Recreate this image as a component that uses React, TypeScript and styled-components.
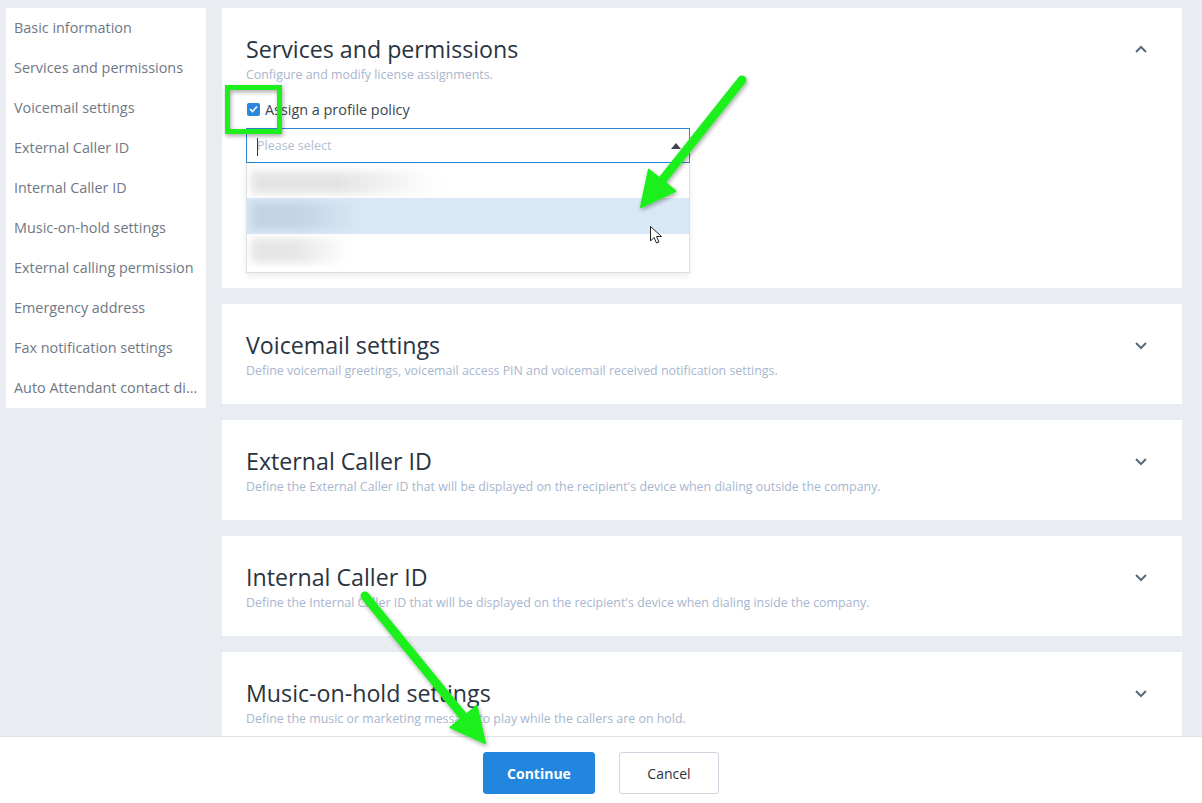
import styled, { createGlobalStyle } from "styled-components";

const GlobalStyle = createGlobalStyle`
  html, body {
    margin: 0;
    padding: 0;
    background: #e9edf1;
    font-family: "Open Sans", Lato, sans-serif;
  }
  * { box-sizing: border-box; }
`;

const Page = styled.div`
  position: relative;
  height: 803px;
  width: 1202px;
  overflow: hidden;
  display: grid;
  grid-template-rows: 1fr auto;
`;

const Top = styled.div`
  display: flex;
  align-items: flex-start;
  gap: 16px;
  padding: 8px 20px 0 6px;
  overflow: hidden;
`;

const Sidebar = styled.nav`
  width: 200px;
  background: #fff;
  display: flex;
  flex-direction: column;
`;

const NavItem = styled.div`
  height: 40px;
  line-height: 39px;
  padding: 0 8px;
  font-size: 14.4px;
  color: #6f7886;
  white-space: nowrap;
  overflow: hidden;
  text-overflow: ellipsis;
`;

const Main = styled.div`
  width: 960px;
  display: flex;
  flex-direction: column;
  gap: 16px;
`;

const Card = styled.section`
  position: relative;
  background: #fff;
  padding: 27px 24px 23px;
`;

const Title = styled.h2`
  margin: 0;
  font-size: 23.2px;
  line-height: 28px;
  font-weight: 400;
  color: #2a3441;
`;

const Subtitle = styled.p`
  margin: 2px 0 0;
  font-size: 12.4px;
  line-height: 20px;
  color: #a7b6ce;
`;

const Chevron = styled.svg`
  position: absolute;
  right: 34px;
  top: 36px;
`;

const CheckRow = styled.label`
  display: flex;
  align-items: center;
  gap: 5px;
  height: 20px;
  margin-top: 14px;
  font-size: 14.4px;
  color: #3b4451;
`;

const Box = styled.span`
  width: 13px;
  height: 13px;
  border-radius: 2px;
  background: #2a87dc;
  display: flex;
  align-items: center;
  justify-content: center;
  margin-left: 1px;
`;

const SelectField = styled.div`
  margin-top: 9px;
  width: 444px;
  height: 35px;
  border: 1px solid #2c86d6;
  display: flex;
  align-items: center;
  padding: 0 8px 0 10px;
  font-size: 12.5px;
  color: #b0bed3;
`;

const Caret = styled.span`
  width: 1px;
  height: 18px;
  background: #333;
  margin-right: -1px;
  margin-top: 2px;
`;

const Triangle = styled.span`
  margin-left: auto;
  width: 0;
  height: 0;
  border-left: 5px solid transparent;
  border-right: 5px solid transparent;
  border-bottom: 6px solid #3b4552;
`;

const Menu = styled.div`
  width: 444px;
  height: 110px;
  border: 1px solid #dcdfe3;
  border-top: none;
  box-shadow: 0 3px 6px rgba(0, 0, 0, 0.08);
  padding: 4px 0;
  margin-bottom: -8px;
`;

const Option = styled.div<{ $active?: boolean; $h: number }>`
  height: ${(p) => p.$h}px;
  background: ${(p) => (p.$active ? "#d9e8f6" : "#fff")};
  position: relative;
  overflow: hidden;
`;

const Blur = styled.div<{ $w: number; $c: string }>`
  position: absolute;
  left: 4px;
  top: 4px;
  bottom: 4px;
  width: ${(p) => p.$w}px;
  background: linear-gradient(90deg, ${(p) => p.$c} 0%, ${(p) => p.$c} 45%, rgba(255,255,255,0) 100%);
  filter: blur(4px);
`;

const Footer = styled.footer`
  height: 67px;
  background: #fff;
  border-top: 1px solid #dfe4ea;
  display: flex;
  justify-content: center;
  align-items: flex-start;
  padding-top: 15px;
  gap: 24px;
`;

const Button = styled.button<{ $primary?: boolean }>`
  height: 42px;
  width: ${(p) => (p.$primary ? 112 : 100)}px;
  border-radius: 3px;
  font-family: inherit;
  font-size: 14px;
  font-weight: ${(p) => (p.$primary ? 700 : 400)};
  background: ${(p) => (p.$primary ? "#2286df" : "#fff")};
  color: ${(p) => (p.$primary ? "#fff" : "#2b333d")};
  border: 1px solid ${(p) => (p.$primary ? "#2286df" : "#cfd6df")};
`;

const Overlay = styled.svg`
  position: absolute;
  left: 0;
  top: 0;
  pointer-events: none;
`;

const navItems = [
  "Basic information",
  "Services and permissions",
  "Voicemail settings",
  "External Caller ID",
  "Internal Caller ID",
  "Music-on-hold settings",
  "External calling permission",
  "Emergency address",
  "Fax notification settings",
  "Auto Attendant contact directory",
];

const sections = [
  {
    title: "Voicemail settings",
    sub: "Define voicemail greetings, voicemail access PIN and voicemail received notification settings.",
  },
  {
    title: "External Caller ID",
    sub: "Define the External Caller ID that will be displayed on the recipient's device when dialing outside the company.",
  },
  {
    title: "Internal Caller ID",
    sub: "Define the Internal Caller ID that will be displayed on the recipient's device when dialing inside the company.",
  },
  {
    title: "Music-on-hold settings",
    sub: "Define the music or marketing message to play while the callers are on hold.",
  },
];

function ChevronIcon({ up }: { up?: boolean }) {
  return (
    <Chevron width="14" height="10" viewBox="0 0 14 10">
      <polyline
        points={up ? "2,8 7,3 12,8" : "2,3 7,8 12,3"}
        fill="none"
        stroke="#5a6a7d"
        strokeWidth="2"
      />
    </Chevron>
  );
}

function Arrow({ x1, y1, x2, y2 }: { x1: number; y1: number; x2: number; y2: number }) {
  const dx = x2 - x1;
  const dy = y2 - y1;
  const len = Math.hypot(dx, dy);
  const ux = dx / len;
  const uy = dy / len;
  const head = 34;
  const half = 17;
  const bx = x2 - ux * head;
  const by = y2 - uy * head;
  const px = -uy;
  const py = ux;
  const pts = `${x2},${y2} ${bx + px * half},${by + py * half} ${bx - px * half},${by - py * half}`;
  return (
    <g filter="url(#shadow)">
      <line x1={x1} y1={y1} x2={bx + ux * 4} y2={by + uy * 4} stroke="#1ef01e" strokeWidth="9" strokeLinecap="round" />
      <polygon points={pts} fill="#1ef01e" stroke="#1ef01e" strokeWidth="2" strokeLinejoin="round" />
    </g>
  );
}

export default function App() {
  return (
    <>
      <GlobalStyle />
      <Page>
        <Top>
          <Sidebar>
            {navItems.map((n) => (
              <NavItem key={n}>{n}</NavItem>
            ))}
          </Sidebar>
          <Main>
            <Card>
              <Title>Services and permissions</Title>
              <Subtitle>Configure and modify license assignments.</Subtitle>
              <ChevronIcon up />
              <CheckRow>
                <Box>
                  <svg width="9" height="8" viewBox="0 0 9 8">
                    <polyline points="1,4 3.5,6.5 8,1.5" fill="none" stroke="#fff" strokeWidth="1.6" />
                  </svg>
                </Box>
                Assign a profile policy
              </CheckRow>
              <SelectField>
                <Caret />
                Please select
                <Triangle />
              </SelectField>
              <Menu>
                <Option $h={31}>
                  <Blur $w={190} $c="#e4e4e4" />
                </Option>
                <Option $h={36} $active>
                  <Blur $w={110} $c="#c3d3e4" />
                </Option>
                <Option $h={33}>
                  <Blur $w={100} $c="#e6e6e6" />
                </Option>
              </Menu>
            </Card>
            {sections.map((s) => (
              <Card key={s.title}>
                <Title>{s.title}</Title>
                <Subtitle>{s.sub}</Subtitle>
                <ChevronIcon />
              </Card>
            ))}
          </Main>
        </Top>
        <Footer>
          <Button $primary>Continue</Button>
          <Button>Cancel</Button>
        </Footer>
        <Overlay width="1202" height="803" viewBox="0 0 1202 803">
          <defs>
            <filter id="shadow" x="-20%" y="-20%" width="140%" height="140%">
              <feDropShadow dx="1" dy="2" stdDeviation="2" floodColor="#000" floodOpacity="0.35" />
            </filter>
          </defs>
          <rect x="227.5" y="87.5" width="52" height="44" fill="none" stroke="#1ef01e" strokeWidth="5" filter="url(#shadow)" />
          <Arrow x1={742} y1={80} x2={641} y2={207} />
          <Arrow x1={365} y1={596} x2={485} y2={743} />
          <g transform="translate(650,226)">
            <path d="M0.5,0.5 L0.5,15 L4,11.5 L6.5,17 L9,16 L6.5,10.5 L11.5,10.5 Z" fill="#fff" stroke="#222" strokeWidth="1" strokeLinejoin="round" />
          </g>
        </Overlay>
      </Page>
    </>
  );
}
